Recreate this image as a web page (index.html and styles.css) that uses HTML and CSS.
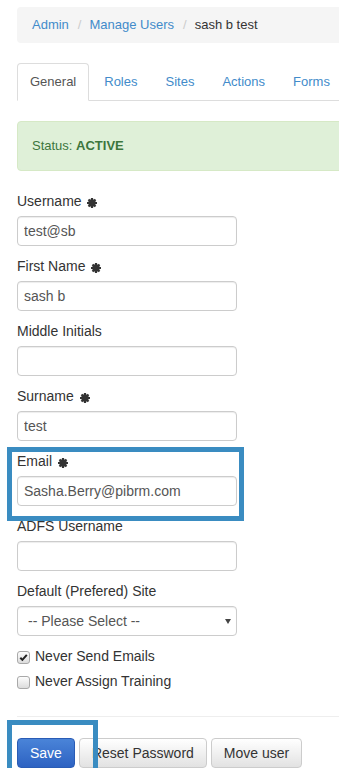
FILE: index.html
```html
<!DOCTYPE html>
<html lang="en">
<head>
    <meta charset="UTF-8">
    <meta name="viewport" content="width=device-width, initial-scale=1.0">
    <title>Edit User</title>
    <link rel="stylesheet" href="styles.css">
</head>
<body>
    <div class="page">
        <ol class="breadcrumb">
            <li><a href="#">Admin</a></li>
            <li><a href="#">Manage Users</a></li>
            <li class="active">sash b test</li>
        </ol>

        <ul class="nav-tabs">
            <li class="active"><a href="#">General</a></li>
            <li><a href="#">Roles</a></li>
            <li><a href="#">Sites</a></li>
            <li><a href="#">Actions</a></li>
            <li><a href="#">Forms</a></li>
        </ul>

        <div class="alert">Status: <strong>ACTIVE</strong></div>

        <form class="user-form">
            <div class="form-group">
                <label>Username <svg class="req" viewBox="0 0 10 10"><path d="M5 0V10M0 5H10M1.5 1.5L8.5 8.5M8.5 1.5L1.5 8.5"/><circle cx="5" cy="5" r="2.6"/></svg></label>
                <input type="text" class="form-control" value="test@sb">
            </div>
            <div class="form-group">
                <label>First Name <svg class="req" viewBox="0 0 10 10"><path d="M5 0V10M0 5H10M1.5 1.5L8.5 8.5M8.5 1.5L1.5 8.5"/><circle cx="5" cy="5" r="2.6"/></svg></label>
                <input type="text" class="form-control" value="sash b">
            </div>
            <div class="form-group">
                <label>Middle Initials</label>
                <input type="text" class="form-control" value="">
            </div>
            <div class="form-group">
                <label>Surname <svg class="req" viewBox="0 0 10 10"><path d="M5 0V10M0 5H10M1.5 1.5L8.5 8.5M8.5 1.5L1.5 8.5"/><circle cx="5" cy="5" r="2.6"/></svg></label>
                <input type="text" class="form-control" value="test">
            </div>
            <div class="form-group">
                <label>Email <svg class="req" viewBox="0 0 10 10"><path d="M5 0V10M0 5H10M1.5 1.5L8.5 8.5M8.5 1.5L1.5 8.5"/><circle cx="5" cy="5" r="2.6"/></svg></label>
                <input type="text" class="form-control" value="Sasha.Berry@pibrm.com">
            </div>
            <div class="form-group">
                <label>ADFS Username</label>
                <input type="text" class="form-control" value="">
            </div>
            <div class="form-group">
                <label>Default (Prefered) Site</label>
                <div class="select-wrap">
                    <select class="form-control">
                        <option>-- Please Select --</option>
                    </select>
                </div>
            </div>

            <div class="checkbox">
                <span class="box checked"><svg viewBox="0 0 12 12"><path d="M2.5 6.2L4.8 8.6L9.6 3.2"/></svg></span>
                Never Send Emails
            </div>
            <div class="checkbox">
                <span class="box"></span>
                Never Assign Training
            </div>

            <hr>

            <div class="actions">
                <button type="button" class="btn btn-primary">Save</button>
                <button type="button" class="btn">Reset Password</button>
                <button type="button" class="btn">Move user</button>
            </div>
        </form>

        <!-- annotation boxes drawn over the form -->
        <div class="highlight hl-email"></div>
        <div class="highlight hl-save"></div>
    </div>
</body>
</html>
```

FILE: styles.css
```css
html, body {
    overflow: hidden;
}

body {
    margin: 0;
    font-family: "Liberation Sans", Arial, sans-serif;
    font-size: 14px;
    line-height: 20px;
    color: #333;
    background: #fff;
}

a {
    color: #428bca;
    text-decoration: none;
}

.page {
    position: relative;
    width: 400px;
    padding: 7px 0 0 17px;
}

/* breadcrumb */
.breadcrumb {
    display: flex;
    margin: 0 0 20px;
    padding: 8px 15px;
    list-style: none;
    background: #f5f5f5;
    border-radius: 4px;
    font-size: 13px;
}

.breadcrumb li + li::before {
    content: "/";
    color: #ccc;
    padding: 0 8px 0 9px;
}

.breadcrumb .active {
    color: #333;
}

/* tabs */
.nav-tabs {
    display: flex;
    margin: 0;
    padding: 0;
    list-style: none;
    border-bottom: 1px solid #ddd;
    font-size: 13px;
}

.nav-tabs li {
    margin: 0 2px -1px 0;
}

.nav-tabs a {
    display: block;
    padding: 9px 12px;
    line-height: 18px;
    border: 1px solid transparent;
    border-radius: 4px 4px 0 0;
}

.nav-tabs .active a {
    color: #555;
    background: #fff;
    border-color: #ddd #ddd transparent;
}

/* status */
.alert {
    margin: 20px 0 20px;
    padding: 15px 14px;
    line-height: 18px;
    font-size: 13px;
    color: #3c763d;
    background: #dff0d8;
    border: 1px solid #d6e9c6;
    border-radius: 4px;
}

/* form */
.form-group {
    margin-bottom: 10px;
}

.form-group label {
    display: block;
    margin-bottom: 5px;
}

.req {
    width: 10px;
    height: 10px;
    margin-left: 2px;
    vertical-align: -2px;
    fill: #333;
    stroke: #333;
    stroke-width: 2.2;
}

.form-control {
    display: block;
    box-sizing: border-box;
    width: 220px;
    height: 30px;
    padding: 4px 6px;
    font-family: inherit;
    font-size: 14px;
    line-height: 20px;
    color: #555;
    background: #fff;
    border: 1px solid #ccc;
    border-radius: 4px;
    box-shadow: inset 0 1px 1px rgba(0,0,0,0.075);
}

.select-wrap {
    position: relative;
    width: 220px;
}

.select-wrap select {
    -webkit-appearance: none;
    appearance: none;
    padding-left: 10px;
}

.select-wrap::after {
    content: "";
    position: absolute;
    right: 6px;
    top: 13px;
    border-left: 3px solid transparent;
    border-right: 3px solid transparent;
    border-top: 5px solid #444;
}

.checkbox {
    display: flex;
    align-items: center;
    margin-bottom: 5px;
}

.user-form .checkbox:first-of-type {
    margin-top: 10px;
}

.box {
    box-sizing: border-box;
    width: 13px;
    height: 13px;
    margin: 3px 5px 0 0;
    border: 1px solid #a9a9a9;
    border-radius: 3px;
    background: linear-gradient(#fdfdfd, #dcdcdc);
}

.box svg {
    display: block;
    width: 11px;
    height: 11px;
    fill: none;
    stroke: #222;
    stroke-width: 2.2;
}

hr {
    margin: 25px 0 21px;
    border: 0;
    border-top: 1px solid #eee;
}

.actions {
    display: flex;
    gap: 4px;
}

.btn {
    height: 30px;
    padding: 4px 12px;
    font-family: inherit;
    font-size: 14px;
    line-height: 20px;
    color: #333;
    background: linear-gradient(#fff, #e2e2e2);
    border: 1px solid #ccc;
    border-radius: 4px;
    cursor: pointer;
}

.btn-primary {
    color: #fff;
    background: linear-gradient(#4a84d8, #2d62c2);
    border-color: #2a5cb5;
}

/* annotation boxes */
.highlight {
    position: absolute;
    box-sizing: border-box;
    border: 5px solid #3a8cc1;
}

.hl-email {
    left: 7px;
    top: 447px;
    width: 237px;
    height: 74px;
}

.hl-save {
    left: 7px;
    top: 720px;
    width: 91px;
    height: 59px;
}
```
